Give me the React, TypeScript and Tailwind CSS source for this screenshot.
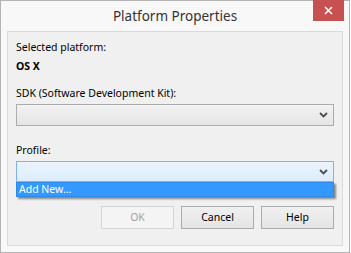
import React from "react";

function Chevron() {
  return (
    <svg width="9" height="6" viewBox="0 0 9 6" className="block">
      <polyline points="1,1 4.5,4.5 8,1" fill="none" stroke="#4d4d4d" strokeWidth="1.8" />
    </svg>
  );
}

export default function App() {
  return (
    <div className="w-[351px] h-[253px] bg-white" style={{ fontFamily: '"Noto Sans", "Open Sans", sans-serif' }}>
      <div className="w-[350px] h-[253px] bg-[#f8f8f8] border border-[#b4b4b4] flex flex-col">
        <div className="relative h-[30px] flex items-center justify-center">
          <span className="text-[13.5px] text-[#333333] leading-none mt-[1px]">Platform Properties</span>
          <div className="absolute top-[-1px] right-[5px] w-[31px] h-[21px] bg-[#c75050] flex items-center justify-center">
            <svg width="9" height="9" viewBox="0 0 9 9">
              <path d="M1 1 L8 8 M8 1 L1 8" stroke="#ffffff" strokeWidth="1.6" />
            </svg>
          </div>
        </div>
        <div className="mx-[6px] mb-[6px] flex-1 bg-[#f0f0f0] border border-[#dadada] px-[8px] flex flex-col text-[10.5px] text-black">
          <div className="mt-[8px] leading-[15px]">Selected platform:</div>
          <div className="mt-[4px] leading-[15px] font-bold">OS X</div>
          <div className="mt-[12px] leading-[15px]">SDK (Software Development Kit):</div>
          <div className="mt-[3px] h-[22px] border border-[#acacac] bg-gradient-to-b from-[#f2f2f2] to-[#e5e5e5] flex items-center justify-end pr-[5px]">
            <Chevron />
          </div>
          <div className="mt-[17px] leading-[15px]">Profile:</div>
          <div className="relative mt-[3px]">
            <div className="h-[21px] border border-[#7eb4ea] bg-gradient-to-b from-[#ecf4fc] to-[#dcecfc] flex items-center justify-end pr-[5px]">
              <Chevron />
            </div>
            <div className="absolute left-0 right-0 top-[21px] h-[15px] bg-[#3399ff] border border-[#2f8ae6] text-white leading-[13px] pl-[2px] shadow-[2px_2px_2px_rgba(0,0,0,0.45)]">
              Add New…
            </div>
          </div>
          <div className="mt-[24px] flex justify-end gap-[7px]">
            <div className="w-[73px] h-[23px] border border-[#d5d5d5] bg-[#f4f4f4] text-[#a3a3a3] flex items-center justify-center">OK</div>
            <div className="w-[73px] h-[23px] border border-[#acacac] bg-gradient-to-b from-[#f0f0f0] to-[#e5e5e5] flex items-center justify-center">Cancel</div>
            <div className="w-[73px] h-[23px] border border-[#acacac] bg-gradient-to-b from-[#f0f0f0] to-[#e5e5e5] flex items-center justify-center">Help</div>
          </div>
        </div>
      </div>
    </div>
  );
}
